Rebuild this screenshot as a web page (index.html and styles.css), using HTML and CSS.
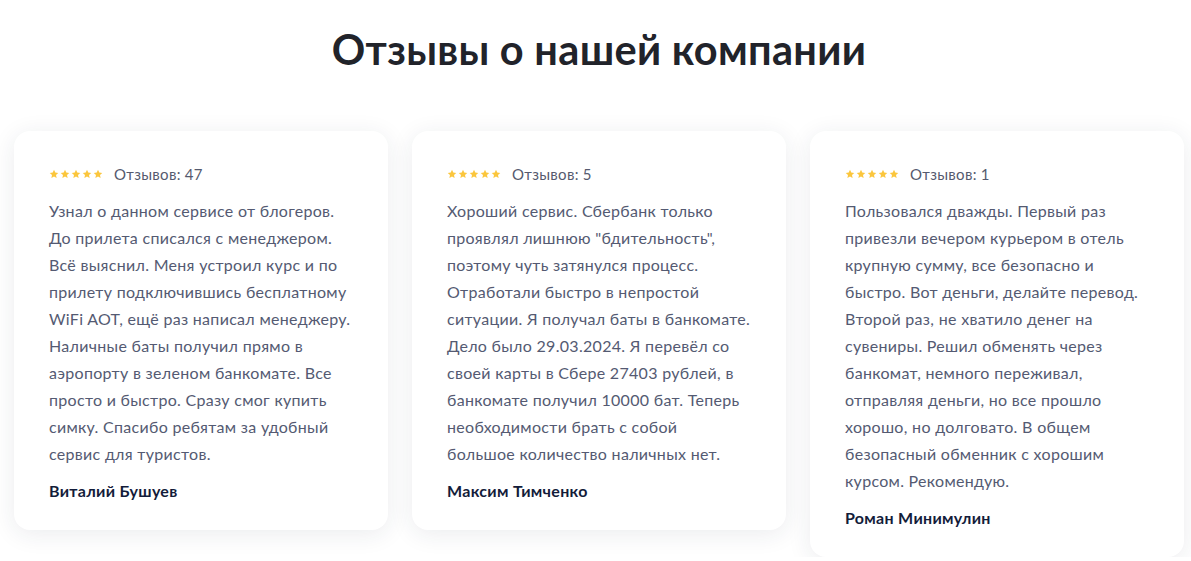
FILE: index.html
```html
<!DOCTYPE html>
<html lang="ru">
<head>
<meta charset="utf-8">
<title>Отзывы</title>
<link rel="stylesheet" href="styles.css">
</head>
<body>
<section class="reviews">
  <h2 class="reviews__title">Отзывы о нашей компании</h2>
  <div class="reviews__list">
    <article class="card">
      <div class="card__rating">
        <span class="stars">
          <svg viewBox="0 0 24 24"><path d="M12 2l3 6.6 7.2.8-5.4 4.9 1.5 7.1L12 17.8 5.7 21.4l1.5-7.1L1.8 9.4 9 8.6z"/></svg>
          <svg viewBox="0 0 24 24"><path d="M12 2l3 6.6 7.2.8-5.4 4.9 1.5 7.1L12 17.8 5.7 21.4l1.5-7.1L1.8 9.4 9 8.6z"/></svg>
          <svg viewBox="0 0 24 24"><path d="M12 2l3 6.6 7.2.8-5.4 4.9 1.5 7.1L12 17.8 5.7 21.4l1.5-7.1L1.8 9.4 9 8.6z"/></svg>
          <svg viewBox="0 0 24 24"><path d="M12 2l3 6.6 7.2.8-5.4 4.9 1.5 7.1L12 17.8 5.7 21.4l1.5-7.1L1.8 9.4 9 8.6z"/></svg>
          <svg viewBox="0 0 24 24"><path d="M12 2l3 6.6 7.2.8-5.4 4.9 1.5 7.1L12 17.8 5.7 21.4l1.5-7.1L1.8 9.4 9 8.6z"/></svg>
        </span>
        <span class="card__count">Отзывов: 47</span>
      </div>
      <p class="card__text">Узнал о данном сервисе от блогеров.<br>До прилета списался с менеджером.<br>Всё выяснил. Меня устроил курс и по<br>прилету подключившись бесплатному<br>WiFi AOT, ещё раз написал менеджеру.<br>Наличные баты получил прямо в<br>аэропорту в зеленом банкомате. Все<br>просто и быстро. Сразу смог купить<br>симку. Спасибо ребятам за удобный<br>сервис для туристов.</p>
      <div class="card__name">Виталий Бушуев</div>
    </article>
    <article class="card">
      <div class="card__rating">
        <span class="stars">
          <svg viewBox="0 0 24 24"><path d="M12 2l3 6.6 7.2.8-5.4 4.9 1.5 7.1L12 17.8 5.7 21.4l1.5-7.1L1.8 9.4 9 8.6z"/></svg>
          <svg viewBox="0 0 24 24"><path d="M12 2l3 6.6 7.2.8-5.4 4.9 1.5 7.1L12 17.8 5.7 21.4l1.5-7.1L1.8 9.4 9 8.6z"/></svg>
          <svg viewBox="0 0 24 24"><path d="M12 2l3 6.6 7.2.8-5.4 4.9 1.5 7.1L12 17.8 5.7 21.4l1.5-7.1L1.8 9.4 9 8.6z"/></svg>
          <svg viewBox="0 0 24 24"><path d="M12 2l3 6.6 7.2.8-5.4 4.9 1.5 7.1L12 17.8 5.7 21.4l1.5-7.1L1.8 9.4 9 8.6z"/></svg>
          <svg viewBox="0 0 24 24"><path d="M12 2l3 6.6 7.2.8-5.4 4.9 1.5 7.1L12 17.8 5.7 21.4l1.5-7.1L1.8 9.4 9 8.6z"/></svg>
        </span>
        <span class="card__count">Отзывов: 5</span>
      </div>
      <p class="card__text">Хороший сервис. Сбербанк только<br>проявлял лишнюю "бдительность",<br>поэтому чуть затянулся процесс.<br>Отработали быстро в непростой<br>ситуации. Я получал баты в банкомате.<br>Дело было 29.03.2024. Я перевёл со<br>своей карты в Сбере 27403 рублей, в<br>банкомате получил 10000 бат. Теперь<br>необходимости брать с собой<br>большое количество наличных нет.</p>
      <div class="card__name">Максим Тимченко</div>
    </article>
    <article class="card">
      <div class="card__rating">
        <span class="stars">
          <svg viewBox="0 0 24 24"><path d="M12 2l3 6.6 7.2.8-5.4 4.9 1.5 7.1L12 17.8 5.7 21.4l1.5-7.1L1.8 9.4 9 8.6z"/></svg>
          <svg viewBox="0 0 24 24"><path d="M12 2l3 6.6 7.2.8-5.4 4.9 1.5 7.1L12 17.8 5.7 21.4l1.5-7.1L1.8 9.4 9 8.6z"/></svg>
          <svg viewBox="0 0 24 24"><path d="M12 2l3 6.6 7.2.8-5.4 4.9 1.5 7.1L12 17.8 5.7 21.4l1.5-7.1L1.8 9.4 9 8.6z"/></svg>
          <svg viewBox="0 0 24 24"><path d="M12 2l3 6.6 7.2.8-5.4 4.9 1.5 7.1L12 17.8 5.7 21.4l1.5-7.1L1.8 9.4 9 8.6z"/></svg>
          <svg viewBox="0 0 24 24"><path d="M12 2l3 6.6 7.2.8-5.4 4.9 1.5 7.1L12 17.8 5.7 21.4l1.5-7.1L1.8 9.4 9 8.6z"/></svg>
        </span>
        <span class="card__count">Отзывов: 1</span>
      </div>
      <p class="card__text">Пользовался дважды. Первый раз<br>привезли вечером курьером в отель<br>крупную сумму, все безопасно и<br>быстро. Вот деньги, делайте перевод.<br>Второй раз, не хватило денег на<br>сувениры. Решил обменять через<br>банкомат, немного переживал,<br>отправляя деньги, но все прошло<br>хорошо, но долговато. В общем<br>безопасный обменник с хорошим<br>курсом. Рекомендую.</p>
      <div class="card__name">Роман Минимулин</div>
    </article>
  </div>
</section>
</body>
</html>
```

FILE: styles.css
```css
html, body {
  margin: 0;
  padding: 0;
  background: #ffffff;
}

body {
  font-family: "Lato", "Open Sans", sans-serif;
  color: #545a72;
}

.reviews {
  padding: 24px 7px 0 14px;
}

.reviews__title {
  margin: 0;
  text-align: center;
  font-family: "Lato", sans-serif;
  font-weight: 700;
  font-size: 41.5px;
  line-height: 50px;
  color: #21232a;
  letter-spacing: 0.3px;
}

.reviews__list {
  display: flex;
  align-items: flex-start;
  gap: 24px;
  margin-top: 57px;
}

.card {
  flex: 0 0 374px;
  box-sizing: border-box;
  padding: 33px 20px 28px 35px;
  background: #ffffff;
  border-radius: 16px;
  box-shadow: 0 4px 24px rgba(30, 40, 70, 0.09);
}

.card__rating {
  display: flex;
  align-items: center;
  gap: 11px;
  height: 20px;
}

.stars {
  display: flex;
  gap: 1px;
}

.stars svg {
  width: 10px;
  height: 10px;
  fill: #fbc63d;
}

.card__count {
  font-size: 15px;
  letter-spacing: 0.3px;
  color: #555a6e;
}

.card__text {
  margin: 13px 0 0;
  font-size: 16px;
  line-height: 27px;
  letter-spacing: 0.3px;
  white-space: nowrap;
  color: #545a72;
}

.card__name {
  margin-top: 13px;
  font-size: 16px;
  font-weight: 700;
  line-height: 22px;
  letter-spacing: 0.3px;
  color: #131c3a;
}
```
